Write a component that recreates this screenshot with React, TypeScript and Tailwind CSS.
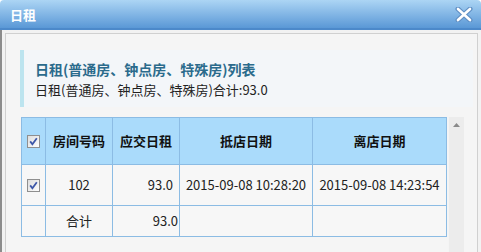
import { ReactNode } from "react";

const FONT = '"Noto Sans CJK SC", "Noto Sans", sans-serif';

// Small checked checkbox, drawn like the old IE-style box
const CheckBox = () => (
  <svg width="13" height="13" viewBox="0 0 13 13" className="block">
    <defs>
      <linearGradient id="cbg" x1="0" y1="0" x2="1" y2="1">
        <stop offset="0" stopColor="#dcdcdc" />
        <stop offset="1" stopColor="#ffffff" />
      </linearGradient>
    </defs>
    <rect x="0.5" y="0.5" width="12" height="12" fill="url(#cbg)" stroke="#8f8f8f" />
    <path d="M3.2 6.4 L5.4 9.2 L9.8 3.2" fill="none" stroke="#3d57a8" strokeWidth="1.8" />
  </svg>
);

const Th = ({ children, w }: { children?: ReactNode; w: string }) => (
  <th className={`${w} border border-[#8cbce4] bg-[#aadbfb] text-[13px] font-bold text-[#111] text-center`}>
    {children}
  </th>
);

export default function App() {
  return (
    <div className="w-[481px] h-[252px] overflow-hidden bg-white flex flex-col" style={{ fontFamily: FONT }}>
      {/* title bar */}
      <div className="h-[30px] shrink-0 rounded-t-[4px] bg-gradient-to-b from-[#acd5f4] to-[#5a98d6] border-b-2 border-[#4c89ca] flex items-center justify-between pl-[10px] pr-[8px]">
        <span className="text-white font-bold text-[13px] leading-none">日租</span>
        <svg width="18" height="15" viewBox="0 0 18 15">
          <path d="M3 2 L15 13 M15 2 L3 13" stroke="#5f8fc4" strokeWidth="5" strokeLinecap="round" />
          <path d="M3 2 L15 13 M15 2 L3 13" stroke="#ffffff" strokeWidth="2.6" strokeLinecap="round" />
        </svg>
      </div>

      {/* dialog body */}
      <div className="flex-1 border-l-2 border-[#8c8c8c] bg-[#f2f2f2] pt-[3px] pl-[3px] pr-[3px]">
        <div className="h-full border border-[#d0d0d0] bg-[#f5f5f5] pt-[16px] pl-[14px] pr-[4px]">
          {/* info box */}
          <div className="h-[57px] border-l-[4px] border-[#bce4ef] bg-[#f3f6f9] pl-[11px] pt-[9px]">
            <div className="text-[14px] font-bold text-[#2b6b8c] leading-[20px]">日租(普通房、钟点房、特殊房)列表</div>
            <div className="text-[13px] text-[#222] leading-[20px] mt-[1px]">日租(普通房、钟点房、特殊房)合计:93.0</div>
          </div>

          {/* table + scrollbar */}
          <div className="mt-[10px] ml-[1px] flex items-start">
            <table className="border-collapse w-[426px] text-[13px] text-[#222] table-fixed">
              <thead>
                <tr className="h-[47px]">
                  <Th w="w-[24px]">
                    <div className="flex justify-center">
                      <CheckBox />
                    </div>
                  </Th>
                  <Th w="w-[67px]">房间号码</Th>
                  <Th w="w-[67px]">应交日租</Th>
                  <Th w="w-[133px]">抵店日期</Th>
                  <Th w="w-[134px]">离店日期</Th>
                </tr>
              </thead>
              <tbody className="bg-[#f7f7f7]">
                <tr className="h-[41px]">
                  <td className="border border-[#8cbce4]">
                    <div className="flex justify-center">
                      <CheckBox />
                    </div>
                  </td>
                  <td className="border border-[#8cbce4] text-center">102</td>
                  <td className="border border-[#8cbce4] text-right pr-[6px]">93.0</td>
                  <td className="border border-[#8cbce4] text-center whitespace-nowrap">2015-09-08 10:28:20</td>
                  <td className="border border-[#8cbce4] text-center whitespace-nowrap">2015-09-08 14:23:54</td>
                </tr>
                <tr className="h-[31px]">
                  <td className="border border-[#8cbce4]"></td>
                  <td className="border border-[#8cbce4] text-center">合计</td>
                  <td className="border border-[#8cbce4] text-right pr-[1px]">93.0</td>
                  <td className="border border-[#8cbce4]"></td>
                  <td className="border border-[#8cbce4]"></td>
                </tr>
              </tbody>
            </table>
            <div className="w-[16px] h-[140px] ml-[1px] bg-[#ececec] border-l border-[#f4f4f4] flex justify-center pt-[6px]">
              <svg width="7" height="4" viewBox="0 0 7 4">
                <path d="M0 4 L3.5 0 L7 4 Z" fill="#8a8a8a" />
              </svg>
            </div>
          </div>
        </div>
      </div>
    </div>
  );
}
